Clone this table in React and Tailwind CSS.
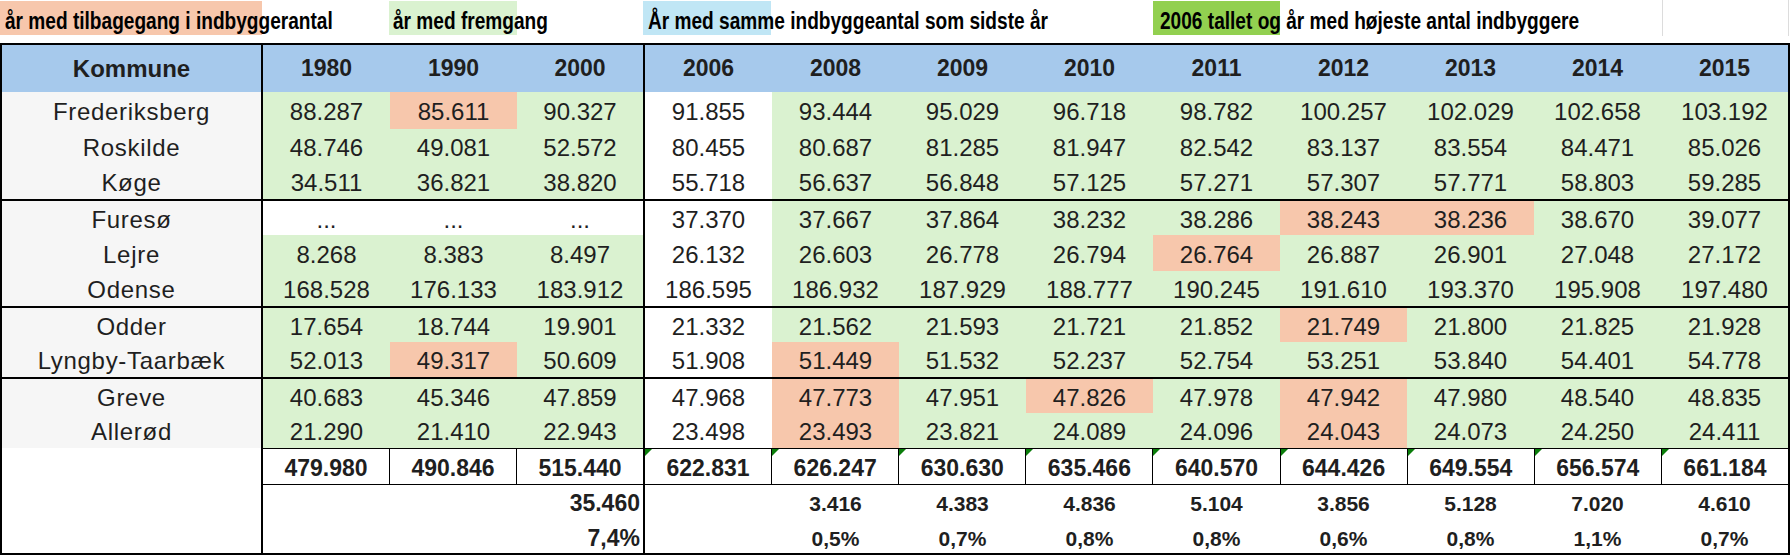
import React from 'react';

// cell fills: g = fremgang, o = tilbagegang, w = hvid
const ROWS = [
  { name: 'Frederiksberg', h: 'h-[37px]', vals: ['88.287', '85.611', '90.327', '91.855', '93.444', '95.029', '96.718', '98.782', '100.257', '102.029', '102.658', '103.192'], fill: 'gogwgggggggg' },
  { name: 'Roskilde', h: 'h-[35px]', vals: ['48.746', '49.081', '52.572', '80.455', '80.687', '81.285', '81.947', '82.542', '83.137', '83.554', '84.471', '85.026'], fill: 'gggwgggggggg' },
  { name: 'Køge', h: 'h-[37px]', end: true, vals: ['34.511', '36.821', '38.820', '55.718', '56.637', '56.848', '57.125', '57.271', '57.307', '57.771', '58.803', '59.285'], fill: 'gggwgggggggg' },
  { name: 'Furesø', h: 'h-[34px]', vals: ['...', '...', '...', '37.370', '37.667', '37.864', '38.232', '38.286', '38.243', '38.236', '38.670', '39.077'], fill: 'wwwwggggoogg' },
  { name: 'Lejre', h: 'h-[36px]', vals: ['8.268', '8.383', '8.497', '26.132', '26.603', '26.778', '26.794', '26.764', '26.887', '26.901', '27.048', '27.172'], fill: 'gggwgggogggg' },
  { name: 'Odense', h: 'h-[37px]', end: true, vals: ['168.528', '176.133', '183.912', '186.595', '186.932', '187.929', '188.777', '190.245', '191.610', '193.370', '195.908', '197.480'], fill: 'gggwgggggggg' },
  { name: 'Odder', h: 'h-[34px]', vals: ['17.654', '18.744', '19.901', '21.332', '21.562', '21.593', '21.721', '21.852', '21.749', '21.800', '21.825', '21.928'], fill: 'gggwggggoggg' },
  { name: 'Lyngby-Taarbæk', h: 'h-[37px]', end: true, vals: ['52.013', '49.317', '50.609', '51.908', '51.449', '51.532', '52.237', '52.754', '53.251', '53.840', '54.401', '54.778'], fill: 'gogwoggggggg' },
  { name: 'Greve', h: 'h-[34px]', vals: ['40.683', '45.346', '47.859', '47.968', '47.773', '47.951', '47.826', '47.978', '47.942', '47.980', '48.540', '48.835'], fill: 'gggwogogoggg' },
  { name: 'Allerød', h: 'h-[35px]', vals: ['21.290', '21.410', '22.943', '23.498', '23.493', '23.821', '24.089', '24.096', '24.043', '24.073', '24.250', '24.411'], fill: 'gggwogggoggg' },
];

const YEARS = ['1980', '1990', '2000', '2006', '2008', '2009', '2010', '2011', '2012', '2013', '2014', '2015'];
const TOTALS = ['479.980', '490.846', '515.440', '622.831', '626.247', '630.630', '635.466', '640.570', '644.426', '649.554', '656.574', '661.184'];
const DIFFS = ['3.416', '4.383', '4.836', '5.104', '3.856', '5.128', '7.020', '4.610'];
const PCTS = ['0,5%', '0,7%', '0,8%', '0,8%', '0,6%', '0,8%', '1,1%', '0,7%'];

const FILL = { g: 'bg-[#daf2d0]', o: 'bg-[#f7c7ac]', w: 'bg-white' };

// widths of the 12 year columns; index 2 carries the thick divider
const colW = (i) =>
  i === 0 || i === 1 ? 'w-[127px]' : i === 2 ? 'w-[128px] border-r-2 border-black' : 'flex-1';

function LegendText({ children }) {
  // narrow look: bold sans squeezed horizontally
  return (
    <span className="relative z-10 inline-block origin-left scale-x-[0.83] font-bold text-[23px] leading-[26px] text-black whitespace-nowrap">
      {children}
    </span>
  );
}

function Legend() {
  return (
    <div className="flex h-[34px] mt-[1px] mb-[8px] w-[1790px]">
      <div className="w-[262px] bg-[#f7c7ac] flex items-end pb-[1px] pl-[5px]">
        <LegendText>år med tilbagegang i indbyggerantal</LegendText>
      </div>
      <div className="w-[127px]" />
      <div className="w-[128px] bg-[#daf2d0] flex items-end pb-[1px] pl-[4px]">
        <LegendText>år med fremgang</LegendText>
      </div>
      <div className="w-[126px]" />
      <div className="w-[128px] bg-[#c0e6f5] flex items-end pb-[1px] pl-[5px]">
        <LegendText>År med samme indbyggeantal som sidste år</LegendText>
      </div>
      <div className="w-[127px]" />
      <div className="w-[127px]" />
      <div className="w-[128px]" />
      <div className="w-[127px] bg-[#92d050] flex items-end pb-[1px] pl-[7px]">
        <LegendText>2006 tallet og år med højeste antal indbyggere</LegendText>
      </div>
      <div className="w-[127px]" />
      <div className="w-[127px]" />
      <div className="w-[128px]" />
      <div className="w-[127px] border-l border-r border-[#dcdcdc] -mt-[1px] h-[36px]" />
    </div>
  );
}

export default function App() {
  return (
    <div className="bg-white w-[1791px] h-[557px] font-['Liberation_Sans',Arial,sans-serif] text-[#1f1f1f]">
      <Legend />
      <div className="w-[1790px] border-2 border-black">
        {/* header */}
        <div className="flex h-[47px] bg-[#a6c9ec] font-bold">
          <div className="w-[261px] border-r-2 border-black flex items-center justify-center text-[24px]">Kommune</div>
          {YEARS.map((y, i) => (
            <div key={y} className={`${colW(i)} flex items-center justify-center text-[23px]`}>{y}</div>
          ))}
        </div>

        {ROWS.map((r) => (
          <div key={r.name} className={`flex ${r.h} ${r.end ? 'border-b-2 border-black' : ''}`}>
            <div className="w-[261px] border-r-2 border-black bg-[#f6f6f6] flex items-center justify-center pt-[3px] text-[24px] tracking-[0.7px]">
              {r.name}
            </div>
            {r.vals.map((v, i) => (
              <div key={i} className={`${colW(i)} ${FILL[r.fill[i]]} flex items-center justify-center pt-[3px] text-[24px]`}>
                {v}
              </div>
            ))}
          </div>
        ))}

        {/* totals */}
        <div className="flex h-[37px] font-bold">
          <div className="w-[261px] border-r-2 border-black" />
          {TOTALS.map((t, i) => (
            <div
              key={t}
              className={`${colW(i)} relative border-t border-b border-black ${i !== 2 && i !== 11 ? 'border-r' : ''} flex items-center justify-center pt-[3px] text-[23px]`}
            >
              {i >= 3 && (
                <span className="absolute top-0 left-0 w-0 h-0 border-t-[7px] border-r-[7px] border-t-[#0a7d0a] border-r-transparent" />
              )}
              {t}
            </div>
          ))}
        </div>

        {/* difference rows */}
        <div className="flex h-[34px] font-bold">
          <div className="w-[261px] border-r-2 border-black" />
          <div className="w-[127px]" />
          <div className="w-[127px]" />
          <div className="w-[128px] border-r-2 border-black flex items-center justify-end pr-[3px] pt-[3px] text-[23px]">35.460</div>
          <div className="flex-1" />
          {DIFFS.map((d, i) => (
            <div key={i} className="flex-1 flex items-center justify-center pt-[4px] text-[21px]">{d}</div>
          ))}
        </div>
        <div className="flex h-[34px] font-bold">
          <div className="w-[261px] border-r-2 border-black" />
          <div className="w-[127px]" />
          <div className="w-[127px]" />
          <div className="w-[128px] border-r-2 border-black flex items-center justify-end pr-[3px] pt-[5px] text-[23px]">7,4%</div>
          <div className="flex-1" />
          {PCTS.map((p, i) => (
            <div key={i} className="flex-1 flex items-center justify-center pt-[5px] text-[21px]">{p}</div>
          ))}
        </div>
      </div>
    </div>
  );
}
